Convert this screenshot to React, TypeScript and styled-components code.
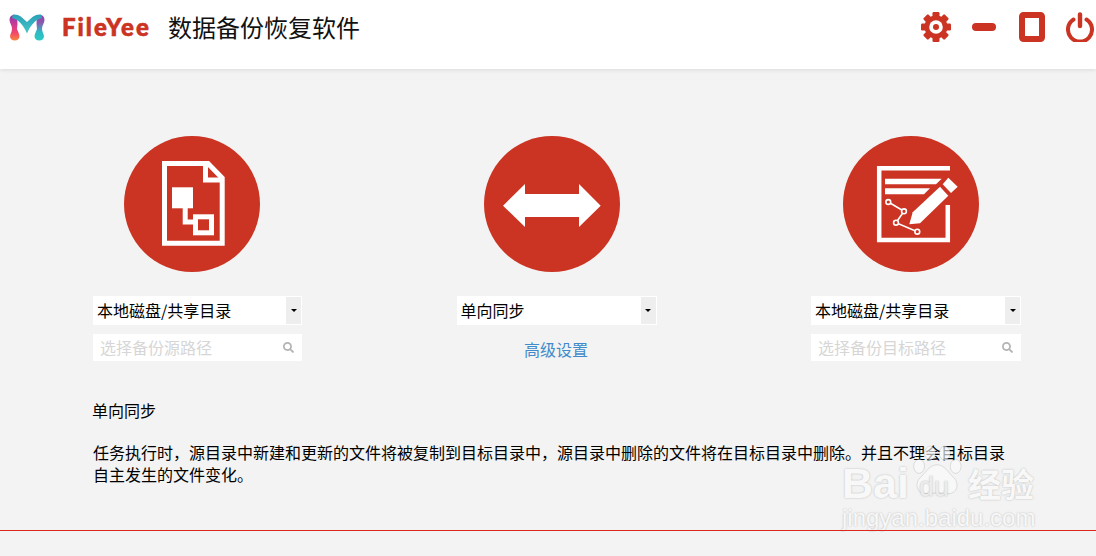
import React from "react";
import styled, { createGlobalStyle } from "styled-components";
import { FaSearch } from "react-icons/fa";

const CJK = `"Noto Sans CJK SC", "Noto Sans", sans-serif`;
const RED = "#cb3322";

const Global = createGlobalStyle`
  html, body { margin: 0; padding: 0; background: #f3f3f3; }
  body { font-family: ${CJK}; color: #000; }
  * { box-sizing: border-box; }
`;
const Page = styled.div`
  position: relative;
  width: 1096px;
  height: 556px;
  overflow: hidden;
  background: #f3f3f3;
`;
const Header = styled.header`
  height: 69px;
  background: #fff;
  box-shadow: 0 1px 4px rgba(0, 0, 0, 0.1);
  display: flex;
  align-items: flex-start;
  padding: 12px 2px 0 9px;
`;
const LogoMark = styled.svg`
  width: 36px;
  height: 28px;
  margin-top: 2px;
  flex: none;
`;
const Brand = styled.span`
  margin: -1px 0 0 17px;
  width: 106px;
  font: 900 24px/32px Lato, sans-serif;
  letter-spacing: 2px;
  -webkit-text-stroke: 0.6px ${RED};
  color: ${RED};
`;
const Title = styled.h1`
  margin: -1px 0 0;
  font: 400 24px/32px ${CJK};
  color: #111;
`;
const Actions = styled.div`
  margin-left: auto;
  display: flex;
  align-items: center;
  height: 30px;
`;
const ActionIcon = styled.svg<{ $gap: number; $w: number }>`
  width: ${(p) => p.$w}px;
  height: 30px;
  margin-left: ${(p) => p.$gap}px;
  flex: none;
`;
const Columns = styled.main`
  display: flex;
  justify-content: space-between;
  padding: 67px 75px 0 93px;
`;
const Column = styled.section<{ $w: number }>`
  width: ${(p) => p.$w}px;
  display: flex;
  flex-direction: column;
  align-items: center;
`;
const Circle = styled.div<{ $shift: number }>`
  width: 136px;
  height: 136px;
  border-radius: 50%;
  background: ${RED};
  margin-left: ${(p) => p.$shift}px;
  margin-bottom: 24px;
  svg { display: block; width: 136px; height: 136px; }
`;
const SelectBox = styled.div`
  width: 100%;
  height: 29px;
  background: #fff;
  display: flex;
  align-items: center;
  padding: 1px 1px 1px 4px;
  font-size: 16px;
  line-height: 27px;
  color: #000;
`;
const SelectText = styled.span`
  flex: 1;
`;
const Caret = styled.span`
  width: 15px;
  height: 27px;
  background: #eeeeee;
  display: flex;
  align-items: center;
  justify-content: center;
  &::after {
    content: "";
    border-left: 3px solid transparent;
    border-right: 3px solid transparent;
    border-top: 3px solid #000;
  }
`;
const PathBox = styled.div`
  width: 100%;
  height: 27px;
  margin-top: 9px;
  background: #fff;
  display: flex;
  align-items: center;
  justify-content: space-between;
  padding: 0 8px 2px 7px;
  font-size: 16px;
  color: #d6d6d6;
  svg { color: #b4b4b4; width: 11px; height: 11px; margin-top: 1px; }
`;
const AdvancedLink = styled.a`
  margin-top: 12px;
  margin-left: -1px;
  font-size: 16px;
  line-height: 24px;
  color: #428bca;
`;
const Description = styled.div`
  margin: 38px 0 0 92px;
  width: 920px;
  font-size: 16px;
  line-height: 22px;
`;
const ModeName = styled.p`
  margin: 0 0 20px;
`;
const Detail = styled.p`
  margin: 0 0 0 1px;
`;
const Rule = styled.hr`
  position: absolute;
  left: 0;
  right: 0;
  top: 530px;
  margin: 0;
  border: 0;
  border-top: 1px solid #e0261c;
`;
const Watermark = styled.div`
  position: absolute;
  left: 842px;
  top: 440px;
  width: 200px;
  height: 92px;
  color: #f8f8f8;
  text-shadow: 0 0 2px rgba(0, 0, 0, 0.26);
  pointer-events: none;
`;
const WmBai = styled.span`
  position: absolute;
  left: 0;
  top: 19px;
  font: 700 43px/48px "Liberation Sans", sans-serif;
`;
const WmPaw = styled.svg`
  position: absolute;
  left: 67px;
  top: 0;
  width: 56px;
  height: 62px;
`;
const WmDu = styled.span`
  position: absolute;
  left: 77px;
  top: 32px;
  font: 400 27px/30px "Liberation Sans", sans-serif;
  color: #ececec;
`;
const WmCn = styled.span`
  position: absolute;
  left: 126px;
  top: 20px;
  font: 700 33px/46px ${CJK};
`;
const WmUrl = styled.span`
  position: absolute;
  left: 0;
  top: 64px;
  font: 400 24px/28px "Liberation Sans", sans-serif;
`;

const Logo = () => (
  <LogoMark viewBox="0 0 36 28">
    <defs>
      <linearGradient id="lg1" x1="0" y1="0" x2="0" y2="1">
        <stop offset="0" stopColor="#8a3aa8" />
        <stop offset="0.35" stopColor="#c83a98" />
        <stop offset="0.7" stopColor="#f4466a" />
        <stop offset="1" stopColor="#f8883a" />
      </linearGradient>
      <linearGradient id="lg2" x1="0" y1="0" x2="0" y2="1">
        <stop offset="0" stopColor="#9a3aa8" />
        <stop offset="0.3" stopColor="#8a5ab0" />
        <stop offset="0.65" stopColor="#30b8c4" />
        <stop offset="1" stopColor="#28cdc4" />
      </linearGradient>
      <linearGradient id="lg3" x1="0" y1="0" x2="0" y2="1">
        <stop offset="0" stopColor="#2a9fb8" />
        <stop offset="1" stopColor="#46c8c8" />
      </linearGradient>
    </defs>
    <path d="M0.5 6 C0.5 2 3 0.5 6 1 C8 3 8.5 7 8.5 10 L8 15 C9 18 10.5 20 10.5 22.5 A4.8 4.8 0 0 1 1 22.5 C1 20 3 18 3 15 C3 11 0.5 9 0.5 6 Z" fill="url(#lg1)" />
    <path d="M35.5 6 C35.5 2 33 0.5 30 1 C28 3 27.5 7 27.5 10 L28 15 C27 18 25.5 20 25.5 22.5 A4.8 4.8 0 0 0 35 22.5 C35 20 33 18 33 15 C33 11 35.5 9 35.5 6 Z" fill="url(#lg2)" />
    <path d="M4 0.5 C10 0 13 3 18 8 C23 3 26 0 32 0.5 L33 4 C27 5 21 12 18 19.5 C15 12 9 5 3 4 Z" fill="url(#lg3)" />
  </LogoMark>
);

const GearIcon = () => (
  <ActionIcon viewBox="0 0 30 30" $gap={0} $w={30}>
    {[0, 45, 90, 135, 180, 225, 270, 315].map((a) => (
      <rect key={a} x="11.5" y="0" width="7" height="7" rx="1.2" fill={RED} transform={`rotate(${a} 15 15)`} />
    ))}
    <circle cx="15" cy="15" r="11.5" fill={RED} />
    <circle cx="15" cy="15" r="6.8" fill="#fff" />
    <circle cx="15" cy="15" r="3" fill={RED} />
  </ActionIcon>
);
const MinusIcon = () => (
  <ActionIcon viewBox="0 0 24 30" $gap={21} $w={24}>
    <rect x="0" y="11" width="24" height="8" rx="4" fill={RED} />
  </ActionIcon>
);
const MaxIcon = () => (
  <ActionIcon viewBox="0 0 26 30" $gap={23} $w={26}>
    <rect x="3" y="3" width="20" height="24" rx="1.5" fill="none" stroke={RED} strokeWidth="6" />
  </ActionIcon>
);
const PowerIcon = () => (
  <ActionIcon viewBox="0 0 28 30" $gap={21} $w={28}>
    <path d="M7.5 7.5 A12 12 0 1 0 20.5 7.5" fill="none" stroke={RED} strokeWidth="4" strokeLinecap="round" />
    <line x1="14" y1="2.5" x2="14" y2="14" stroke={RED} strokeWidth="4.4" strokeLinecap="round" />
  </ActionIcon>
);

const FileGlyph = () => (
  <svg viewBox="0 0 136 136">
    <path d="M40.5 27.5 H84 L98.2 42 V107.2 H40.5 Z" fill="none" stroke="#fff" strokeWidth="5" />
    <path d="M81.5 27 V44 H98" fill="none" stroke="#fff" strokeWidth="5" />
    <rect x="48" y="51.3" width="21" height="21" fill="#fff" />
    <path d="M61.2 72 V86 H70" fill="none" stroke="#fff" strokeWidth="5" />
    <rect x="71.5" y="80.8" width="16" height="16" fill="none" stroke="#fff" strokeWidth="5" />
  </svg>
);
const ArrowGlyph = () => (
  <svg viewBox="0 0 136 136">
    <path d="M19 69.7 L41 48 V58 H95 V48 L116.7 69.7 L95 91 V81 H41 V91 Z" fill="#fff" />
  </svg>
);
const NoteGlyph = () => (
  <svg viewBox="0 0 136 136">
    <path d="M107 32.2 H36.2 V104 H104.8 V69" fill="none" stroke="#fff" strokeWidth="4.5" />
    <path d="M42 42.7 H98.7 L93 48.3 H42 Z" fill="#fff" />
    <path d="M42 52.3 H87 L81 58.3 H42 Z" fill="#fff" />
    <path d="M99.7 48.3 L105.3 41.7 L114.7 50.7 L108 57 Z" fill="#fff" />
    <path d="M97 50.7 L105.3 59.7 L77 87.3 L66.3 88.3 L69.7 76.3 Z" fill="#fff" />
    <path d="M45.3 66 L61 75.3 L53 86.7 L74.3 95.7" fill="none" stroke="#fff" strokeWidth="1.6" />
    {[[45.3, 66], [61, 75.3], [53, 86.7], [74.3, 95.7]].map(([x, y]) => (
      <circle key={x} cx={x} cy={y} r="2.4" fill={RED} stroke="#fff" strokeWidth="1.6" />
    ))}
  </svg>
);

export default function App() {
  return (
    <Page>
      <Global />
      <Header>
        <Logo />
        <Brand>FileYee</Brand>
        <Title>数据备份恢复软件</Title>
        <Actions>
          <GearIcon />
          <MinusIcon />
          <MaxIcon />
          <PowerIcon />
        </Actions>
      </Header>
      <Columns>
        <Column $w={209}>
          <Circle $shift={-11}><FileGlyph /></Circle>
          <SelectBox><SelectText>本地磁盘/共享目录</SelectText><Caret /></SelectBox>
          <PathBox>选择备份源路径<FaSearch /></PathBox>
        </Column>
        <Column $w={200}>
          <Circle $shift={-10}><ArrowGlyph /></Circle>
          <SelectBox><SelectText>单向同步</SelectText><Caret /></SelectBox>
          <AdvancedLink>高级设置</AdvancedLink>
        </Column>
        <Column $w={210}>
          <Circle $shift={-10}><NoteGlyph /></Circle>
          <SelectBox><SelectText>本地磁盘/共享目录</SelectText><Caret /></SelectBox>
          <PathBox>选择备份目标路径<FaSearch /></PathBox>
        </Column>
      </Columns>
      <Description>
        <ModeName>单向同步</ModeName>
        <Detail>任务执行时，源目录中新建和更新的文件将被复制到目标目录中，源目录中删除的文件将在目标目录中删除。并且不理会目标目录自主发生的文件变化。</Detail>
      </Description>
      <Watermark>
        <WmBai>Bai</WmBai>
        <WmPaw viewBox="0 0 72 64">
          <g fill="rgba(250,250,250,0.65)" stroke="rgba(0,0,0,0.14)" strokeWidth="1">
            <ellipse cx="13" cy="26" rx="7" ry="9" />
            <ellipse cx="27" cy="9" rx="7" ry="9" />
            <ellipse cx="46" cy="9" rx="7" ry="9" />
            <ellipse cx="60" cy="26" rx="7" ry="9" />
            <path d="M36 24 C46 24 50 34 58 41 C66 50 60 62 50 61 C42 60 30 60 22 61 C12 62 6 50 14 41 C22 34 26 24 36 24 Z" />
          </g>
        </WmPaw>
        <WmDu>du</WmDu>
        <WmCn>经验</WmCn>
        <WmUrl>jingyan.baidu.com</WmUrl>
      </Watermark>
      <Rule />
    </Page>
  );
}
